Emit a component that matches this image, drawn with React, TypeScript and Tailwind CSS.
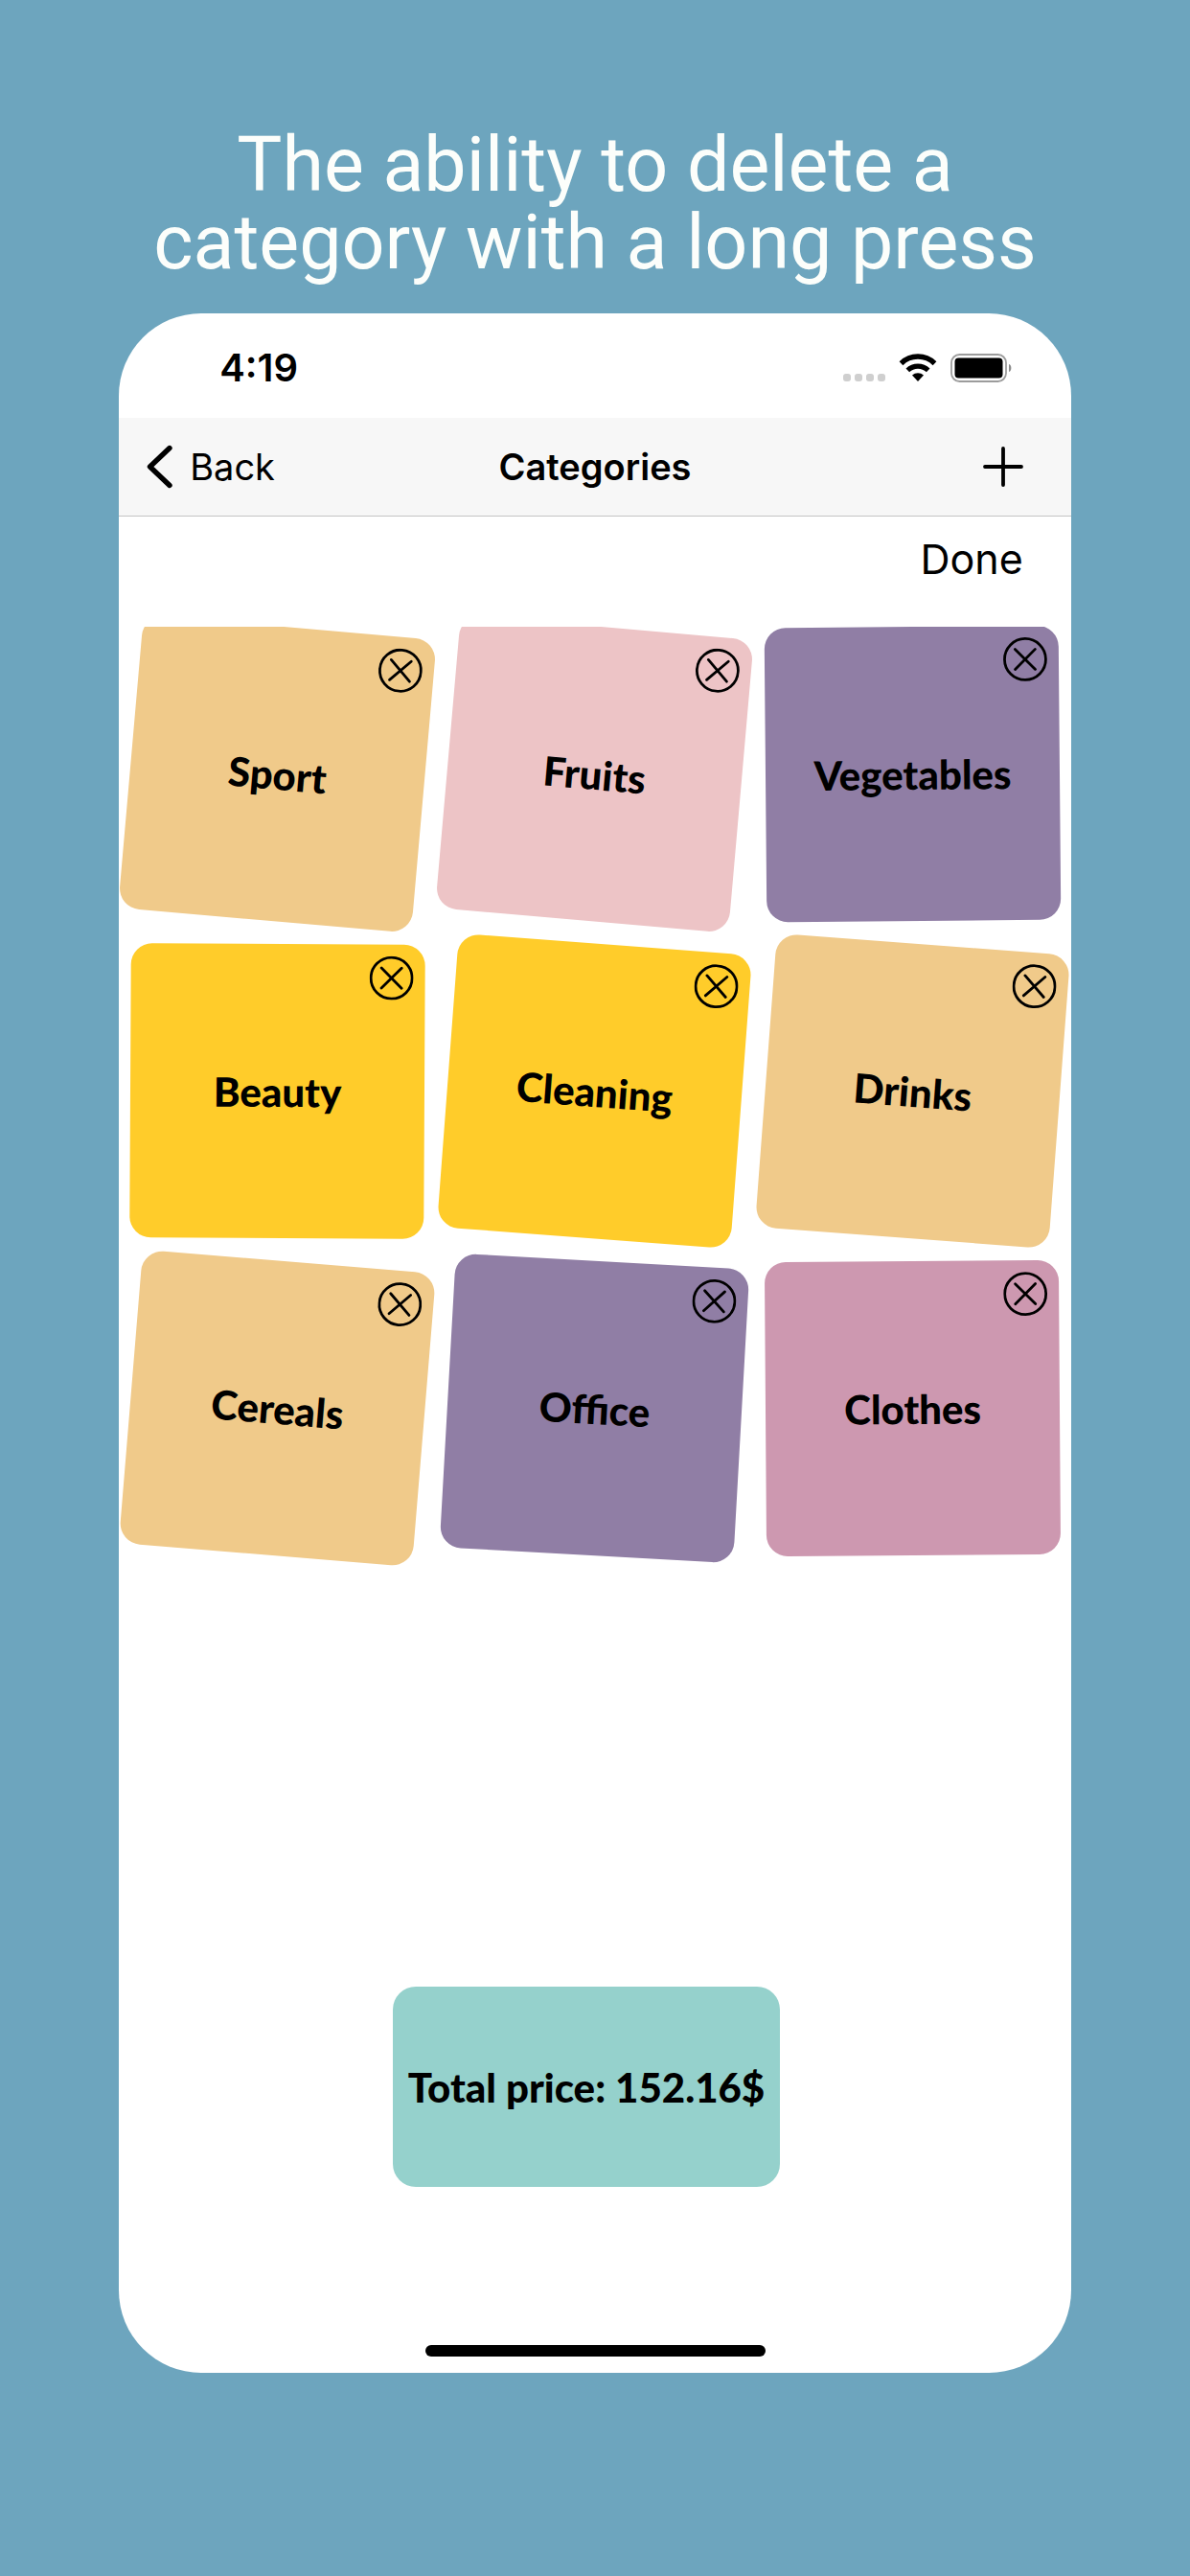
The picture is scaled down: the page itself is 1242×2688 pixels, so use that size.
type Category = { name: string; color: string; tilt: string };

const categories: Category[] = [
  { name: "Sport", color: "bg-[#f0ca8a]", tilt: "rotate-[5deg]" },
  { name: "Fruits", color: "bg-[#edc4c6]", tilt: "rotate-[5deg]" },
  { name: "Vegetables", color: "bg-[#907ea5]", tilt: "-rotate-[0.5deg]" },
  { name: "Beauty", color: "bg-[#ffcc2a]", tilt: "rotate-[0.3deg]" },
  { name: "Cleaning", color: "bg-[#ffcc2a]", tilt: "rotate-[4.3deg]" },
  { name: "Drinks", color: "bg-[#f0ca8a]", tilt: "rotate-[4.3deg]" },
  { name: "Cereals", color: "bg-[#f0ca8a]", tilt: "rotate-[4.7deg]" },
  { name: "Office", color: "bg-[#907ea5]", tilt: "rotate-[3.2deg]" },
  { name: "Clothes", color: "bg-[#cd98b0]", tilt: "-rotate-[0.4deg]" },
];

function WifiIcon() {
  return (
    <svg width="40" height="30" viewBox="0 0 40 30" fill="none" aria-label="Wi-Fi" role="img">
      <path d="M2.5 10.2a25 25 0 0 1 35 0" stroke="black" strokeWidth="5.4" />
      <path d="M9.3 17.4a15.4 15.4 0 0 1 21.4 0" stroke="black" strokeWidth="5.2" />
      <path d="M14 22.6a8.7 8.7 0 0 1 12 0L20 29z" fill="black" />
    </svg>
  );
}

function BatteryIcon() {
  return (
    <svg width="65" height="30" viewBox="0 0 65 30" fill="none" aria-label="Battery full" role="img">
      <rect x="1" y="1" width="57" height="28" rx="8.5" stroke="#9c9c9c" strokeWidth="1.8" />
      <rect x="4.5" y="4.5" width="50" height="21" rx="4" fill="black" />
      <path d="M61 11c3.2 1 3.2 7 0 8z" fill="#8c8c8c" />
    </svg>
  );
}

function StatusBar() {
  return (
    <div className="flex h-[109px] items-center justify-between pt-1 pr-[61px] pl-[105px]">
      <span className="text-[40px] leading-[44px] font-semibold">4:19</span>
      <div className="flex items-center gap-[14px]">
        <div className="flex gap-1 pt-5">
          <span className="size-2 rounded-[3px] bg-[#cfcfcf]" />
          <span className="size-2 rounded-[3px] bg-[#cfcfcf]" />
          <span className="size-2 rounded-[3px] bg-[#cfcfcf]" />
          <span className="size-2 rounded-[3px] bg-[#cfcfcf]" />
        </div>
        <WifiIcon />
        <BatteryIcon />
      </div>
    </div>
  );
}

function NavBar() {
  return (
    <header className="grid h-[103px] grid-cols-3 items-center border-b border-[#c4c4c4] bg-[#f7f7f7] pr-[50px] pl-[28px]">
      <button type="button" className="flex items-center gap-[18px] justify-self-start text-[38px] leading-[48px]">
        <svg width="28" height="46" viewBox="0 0 28 46" fill="none" aria-hidden="true">
          <path d="M25 3.5L4.5 23 25 42.5" stroke="black" strokeWidth="5.4" strokeLinecap="round" strokeLinejoin="round" />
        </svg>
        Back
      </button>
      <h2 className="justify-self-center pl-[22px] text-[38px] leading-[48px] font-semibold">Categories</h2>
      <button type="button" aria-label="Add category" className="justify-self-end">
        <svg width="42" height="42" viewBox="0 0 42 42" fill="none" aria-hidden="true">
          <path d="M21 2v38M2 21h38" stroke="black" strokeWidth="3.8" strokeLinecap="round" />
        </svg>
      </button>
    </header>
  );
}

function Tile({ category }: { category: Category }) {
  return (
    <article
      className={`relative flex aspect-square items-center justify-center rounded-[22px] ${category.color} ${category.tilt}`}
    >
      <h3 className="font-[Marker_Felt,Lato,sans-serif] text-[42px] leading-[52px] font-black">{category.name}</h3>
      <button type="button" aria-label={`Delete ${category.name}`} className="absolute top-3 right-3">
        <svg width="46" height="46" viewBox="0 0 46 46" fill="none" aria-hidden="true">
          <circle cx="23" cy="23" r="21.5" stroke="black" strokeWidth="2.8" />
          <path d="M12.5 12.5l21 21M33.5 12.5l-21 21" stroke="black" strokeWidth="2.8" strokeLinecap="round" />
        </svg>
      </button>
    </article>
  );
}

export default function App() {
  return (
    <div className="flex min-h-screen flex-col bg-[#6da5be] px-[10%] pt-[132px] pb-[212px] font-[Inter,sans-serif] text-black">
      <h1 className="pb-[33px] text-center font-[Roboto,sans-serif] text-[79px] leading-[81px] whitespace-nowrap text-[#fcfefb]">
        The ability to delete a
        <br />
        category with a long press
      </h1>
      <main className="flex flex-1 flex-col overflow-hidden rounded-[86px] bg-white">
        <StatusBar />
        <NavBar />
        <div className="flex justify-end px-[50px] pt-4 pb-[43px]">
          <button type="button" className="text-[43px] leading-[56px]">
            Done
          </button>
        </div>
        <section aria-label="Category list" className="grid grid-cols-3 gap-6 overflow-hidden px-3 pb-6">
          {categories.map((category) => (
            <Tile key={category.name} category={category} />
          ))}
        </section>
        <div className="mt-auto flex justify-center pr-[18px]">
          <p className="flex h-[209px] w-[404px] items-center justify-center rounded-[24px] bg-[#95d1cc] font-[Marker_Felt,Lato,sans-serif] text-[42px] leading-[52px] font-black whitespace-nowrap">
            Total price: 152.16$
          </p>
        </div>
        <div className="mt-[165px] mb-[17px] h-3 w-[355px] self-center rounded-full bg-black" />
      </main>
    </div>
  );
}
